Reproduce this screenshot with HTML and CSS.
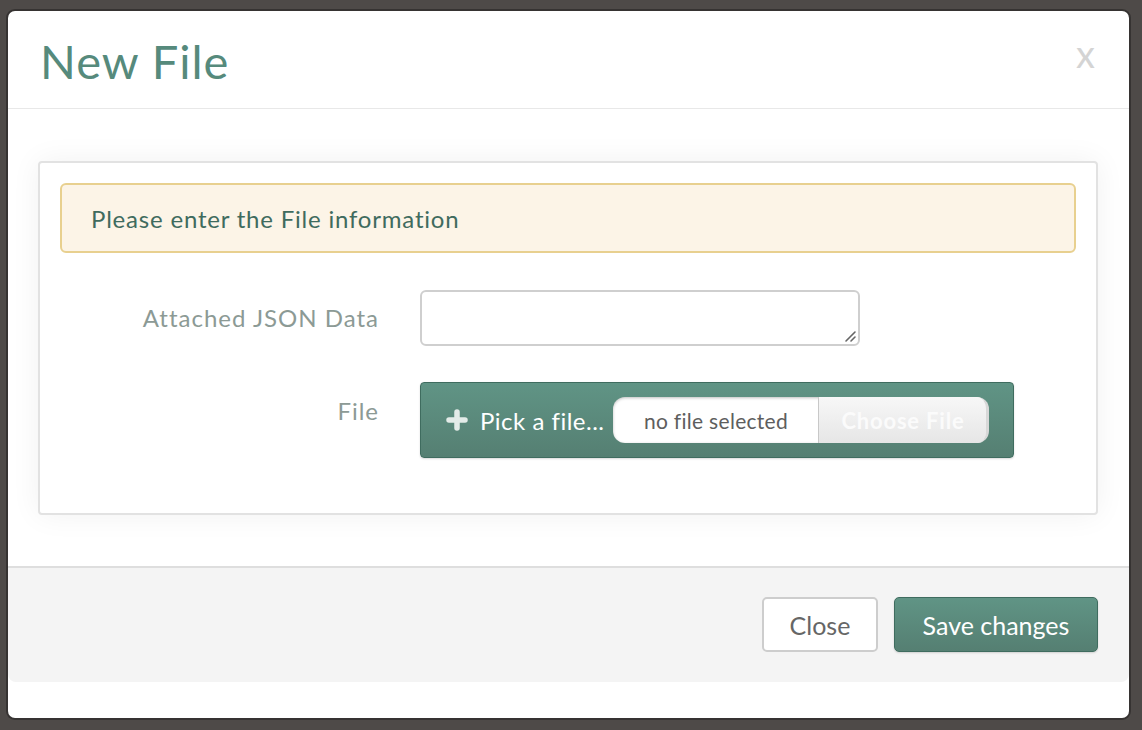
FILE: index.html
```html
<!DOCTYPE html>
<html>
<head>
<meta charset="utf-8">
<link rel="stylesheet" href="styles.css">
</head>
<body>
<div class="backdrop">
  <div class="modal">
    <div class="modal-header">
      <h1 class="title">New File</h1>
      <span class="close-x">x</span>
    </div>
    <div class="modal-body">
      <div class="panel">
        <div class="alert">Please enter the File information</div>
        <div class="form-row">
          <label class="label">Attached JSON Data</label>
          <div class="textarea"><svg class="grip" width="14" height="14" viewBox="0 0 14 14"><path d="M12 3 L3 12 M12 8 L8 12" stroke="#666" stroke-width="1.6" stroke-linecap="round"/></svg></div>
        </div>
        <div class="form-row file-row">
          <label class="label">File</label>
          <div class="file-btn">
            <svg class="plus" width="22" height="22" viewBox="0 0 22 22"><path d="M11 3v16M3 11h16" stroke="#e3ebe8" stroke-width="5.5" stroke-linecap="round"/></svg>
            <span class="pick">Pick a file...</span>
            <div class="native">
              <span class="nofile">no file selected</span>
              <span class="choose">Choose File</span>
            </div>
          </div>
        </div>
      </div>
    </div>
    <div class="modal-footer">
      <div class="footer-bar">
        <button class="btn btn-default">Close</button>
        <button class="btn btn-primary">Save changes</button>
      </div>
    </div>
  </div>
</div>
</body>
</html>
```
FILE: styles.css
```css
html, body {
  margin: 0;
  padding: 0;
}
body {
  font-family: Lato, "Open Sans", sans-serif;
  background: #4e4a48;
}
.backdrop {
  width: 1142px;
  height: 730px;
  padding: 11px 0 0 8px;
  box-sizing: border-box;
  background: #4e4a48;
}
.modal {
  width: 1121px;
  height: 707px;
  background: #fff;
  border-radius: 7px;
  box-shadow: 0 0 0 2px #363332;
  display: flex;
  flex-direction: column;
  overflow: hidden;
}
.modal-header {
  height: 97px;
  border-bottom: 1px solid #e8e8e8;
  display: flex;
  align-items: center;
  justify-content: space-between;
  padding: 0 34px 0 32px;
  flex-shrink: 0;
}
.title {
  margin: 0;
  font-size: 47px;
  font-weight: 400;
  color: #568a7c;
  letter-spacing: 1px;
  line-height: 1;
  padding-top: 4px;
}
.close-x {
  font-size: 38px;
  color: #d4d4d4;
  line-height: 1;
  margin-top: -14px;
}
.modal-body {
  height: 457px;
  padding: 52px 31px 0 30px;
  box-sizing: border-box;
  flex-shrink: 0;
}
.panel {
  height: 354px;
  box-sizing: border-box;
  border: 2px solid #e2e2e2;
  border-radius: 4px;
  box-shadow: 0 0 30px rgba(0, 0, 0, 0.06);
  padding: 20px 20px 0 20px;
}
.alert {
  height: 70px;
  box-sizing: border-box;
  background: #fcf4e7;
  border: 2px solid #e8d08f;
  border-radius: 6px;
  padding: 0 0 0 29px;
  display: flex;
  align-items: center;
  font-size: 24px;
  letter-spacing: 0.8px;
  color: #3f6b5e;
}
.form-row {
  display: flex;
  align-items: flex-start;
  margin-top: 37px;
}
.label {
  width: 319px;
  text-align: right;
  font-size: 24px;
  letter-spacing: 1px;
  color: #8c9a95;
  padding-top: 13px;
  flex-shrink: 0;
}
.textarea {
  margin-left: 41px;
  width: 440px;
  height: 56px;
  box-sizing: border-box;
  border: 2px solid #cfcfcf;
  border-radius: 6px;
  position: relative;
}
.grip {
  position: absolute;
  right: 1px;
  bottom: 1px;
}
.file-row {
  margin-top: 36px;
}
.file-row .label {
  padding-top: 14px;
}
.file-btn {
  margin-left: 41px;
  width: 594px;
  height: 76px;
  box-sizing: border-box;
  background: linear-gradient(#609485, #557f72);
  border: 1px solid #3f6c5f;
  border-radius: 4px;
  display: flex;
  align-items: center;
  padding-left: 25px;
  box-shadow: 0 1px 2px rgba(0,0,0,0.15);
}
.plus {
  margin-right: 12px;
}
.pick {
  color: #fff;
  font-size: 24px;
  letter-spacing: 0.5px;
  margin-right: 9px;
}
.native {
  display: flex;
  height: 46px;
  width: 376px;
  background: #fff;
  border-radius: 12px;
  overflow: hidden;
  box-shadow: inset 0 1px 3px rgba(0,0,0,0.25);
  border-right: 3px solid #d8d8d8;
  box-sizing: border-box;
}
.nofile {
  width: 205px;
  display: flex;
  align-items: center;
  justify-content: center;
  font-size: 21px;
  letter-spacing: 0.3px;
  color: #5e5e5e;
  border-right: 1px solid #c8c8c8;
}
.choose {
  flex: 1;
  display: flex;
  align-items: center;
  justify-content: center;
  background: linear-gradient(#f7f7f7, #e6e6e6);
  color: #fbfbfb;
  font-size: 22px;
  font-weight: 700;
  letter-spacing: 0.8px;
}
.modal-footer {
  flex: 1;
  border-top: 2px solid #dedede;
}
.footer-bar {
  height: 114px;
  background: #f4f4f4;
  border-radius: 0 0 8px 8px;
  display: flex;
  justify-content: flex-end;
  align-items: flex-start;
  padding: 29px 31px 0 0;
  box-sizing: border-box;
  gap: 16px;
}
.btn {
  height: 55px;
  font-family: Lato, "Open Sans", sans-serif;
  font-size: 25px;
  border-radius: 5px;
  padding: 0;
  box-sizing: border-box;
  cursor: pointer;
}
.btn-default {
  background: #fff;
  color: #666;
  border: 2px solid #cdcdcd;
  width: 116px;
}
.btn-primary {
  background: linear-gradient(#609485, #557f72);
  color: #fff;
  border: 1px solid #3f6c5f;
  width: 204px;
  box-shadow: 0 1px 2px rgba(0,0,0,0.15);
}
```
